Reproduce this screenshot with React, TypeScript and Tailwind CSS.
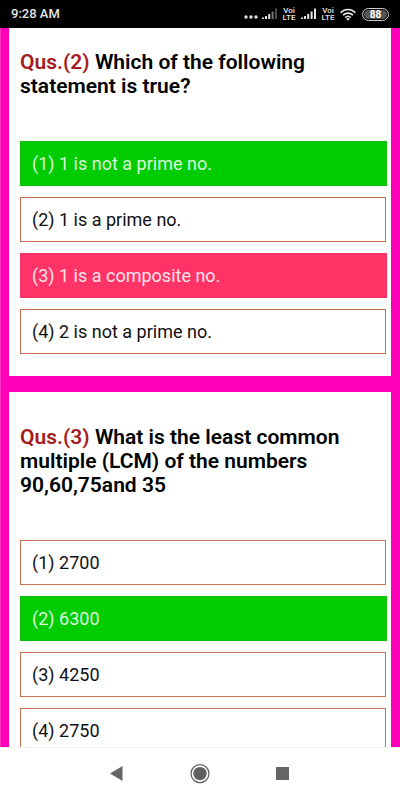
import React from "react";
import clsx from "clsx";

type OptionState = "plain" | "correct" | "wrong";

interface Option {
  text: string;
  state: OptionState;
}

interface Question {
  no: number;
  text: string;
  options: Option[];
}

const questions: Question[] = [
  {
    no: 2,
    text: "Which of the following statement is true?",
    options: [
      { text: "1 is not a prime no.", state: "correct" },
      { text: "1 is a prime no.", state: "plain" },
      { text: "1 is a composite no.", state: "wrong" },
      { text: "2 is not a prime no.", state: "plain" },
    ],
  },
  {
    no: 3,
    text: "What is the least common multiple (LCM) of the numbers 90,60,75and 35",
    options: [
      { text: "2700", state: "plain" },
      { text: "6300", state: "correct" },
      { text: "4250", state: "plain" },
      { text: "2750", state: "plain" },
    ],
  },
];

const Signal: React.FC<{ weak?: boolean }> = ({ weak }) => (
  <svg width="16" height="12" viewBox="0 0 16 12" fill="#e4e4e4">
    <rect x="0" y="9.5" width="2" height="1.5" />
    <rect x="3" y="8" width="2" height="3" />
    <rect x="6.2" y="6" width="2" height="5" />
    <rect x="9.6" y="3.5" width="2" height="7.5" fill={weak ? "#777" : "#e4e4e4"} />
    <rect x="13" y="0.5" width="2" height="10.5" fill={weak ? "#4d4d4d" : "#e4e4e4"} />
  </svg>
);

const VoLte: React.FC = () => (
  <div className="w-[14px] text-center text-[8px] leading-[7px] font-semibold text-[#dcdcdc]">
    <p>Voi</p>
    <p>LTE</p>
  </div>
);

const StatusBar: React.FC = () => (
  <header className="flex h-7 shrink-0 items-center justify-between bg-black pr-[11px] pl-[11px] text-[#e4e4e4]">
    <p className="text-[13px] font-medium">9:28 AM</p>
    <div className="flex items-center">
      <svg width="14" height="12" viewBox="0 0 14 12" fill="#e4e4e4">
        <circle cx="2" cy="9" r="1.7" />
        <circle cx="7" cy="9" r="1.7" />
        <circle cx="12" cy="9" r="1.7" />
      </svg>
      <div className="ml-1 flex items-center gap-1">
        <Signal weak />
        <VoLte />
        <div className="ml-px">
          <Signal />
        </div>
        <VoLte />
      </div>
      <svg
        className="ml-[5px]"
        width="16"
        height="13"
        viewBox="0 0 16 13"
        fill="none"
        stroke="#e4e4e4"
        strokeWidth="1.6"
      >
        <path d="M0.6 4.6C4.8 0.4 11.2 0.4 15.4 4.6" />
        <path d="M3 7.2C5.9 4.4 10.1 4.4 13 7.2" />
        <path d="M5.2 9.6C6.9 8 9.1 8 10.8 9.6" />
        <path d="M6.2 10.7L8 12.8L9.8 10.7C8.8 9.9 7.2 9.9 6.2 10.7Z" fill="#e4e4e4" stroke="none" />
      </svg>
      <div className="ml-[6px] flex h-[13px] w-[27px] rounded-full border border-[#d0d0d0] p-px">
        <p className="flex-1 rounded-full bg-[#555] text-center text-[10px] leading-[10px] font-bold text-white">
          88
        </p>
      </div>
    </div>
  </header>
);

const OptionButton: React.FC<{ no: number; option: Option }> = ({ no, option }) => (
  <button
    type="button"
    className={clsx(
      "h-[45px] border px-[11px] text-left text-lg",
      option.state === "plain" && "mr-px border-[#cb6f55] bg-white text-[#111]",
      option.state === "correct" && "border-[#0dbb0d] bg-[#00cc00] text-[#dcfadc]",
      option.state === "wrong" && "border-[#ef3162] bg-[#ff3366] text-[#ffe3ea]",
    )}
  >
    ({no}) {option.text}
  </button>
);

const QuestionCard: React.FC<{ question: Question }> = ({ question }) => (
  <section className="bg-white pt-[33px] pr-1 pb-[22px] pl-[11px]">
    <h2 className="pr-10 text-[21px] leading-6 font-semibold text-black">
      <span className="text-[#a51c20]">Qus.({question.no})</span> {question.text}
    </h2>
    <div className="mt-[43px] flex flex-col gap-[11px]">
      {question.options.map((option, i) => (
        <OptionButton key={option.text} no={i + 1} option={option} />
      ))}
    </div>
  </section>
);

const NavBar: React.FC = () => (
  <nav className="flex h-[53px] shrink-0 items-center justify-center gap-[60px] border-t border-[#f3f3f3] bg-white">
    <button type="button" aria-label="Back" className="p-1">
      <svg width="16" height="16" viewBox="0 0 16 16" fill="#666">
        <path d="M0 7.5L12.5 0V15Z" />
      </svg>
    </button>
    <button type="button" aria-label="Home">
      <svg width="20" height="20" viewBox="0 0 20 20">
        <circle cx="10" cy="9.6" r="9" fill="none" stroke="#5c5c5c" strokeWidth="1.2" />
        <circle cx="10" cy="9.6" r="6.7" fill="#606060" />
      </svg>
    </button>
    <button type="button" aria-label="Recent apps" className="p-1">
      <svg width="16" height="16" viewBox="0 0 16 16" fill="#666">
        <rect x="2" y="1" width="13" height="13" />
      </svg>
    </button>
  </nav>
);

const App: React.FC = () => {
  return (
    <div className="flex h-screen flex-col bg-white font-['Roboto',sans-serif]">
      <StatusBar />
      <main className="min-h-0 flex-1 overflow-y-auto [scrollbar-width:none]">
        <div className="-mt-[11px] flex flex-col gap-4 border-l border-[#ff33c6] bg-[#ff00b8] pr-[9px] pl-2">
          {questions.map((question) => (
            <QuestionCard key={question.no} question={question} />
          ))}
        </div>
      </main>
      <NavBar />
    </div>
  );
};

export default App;
